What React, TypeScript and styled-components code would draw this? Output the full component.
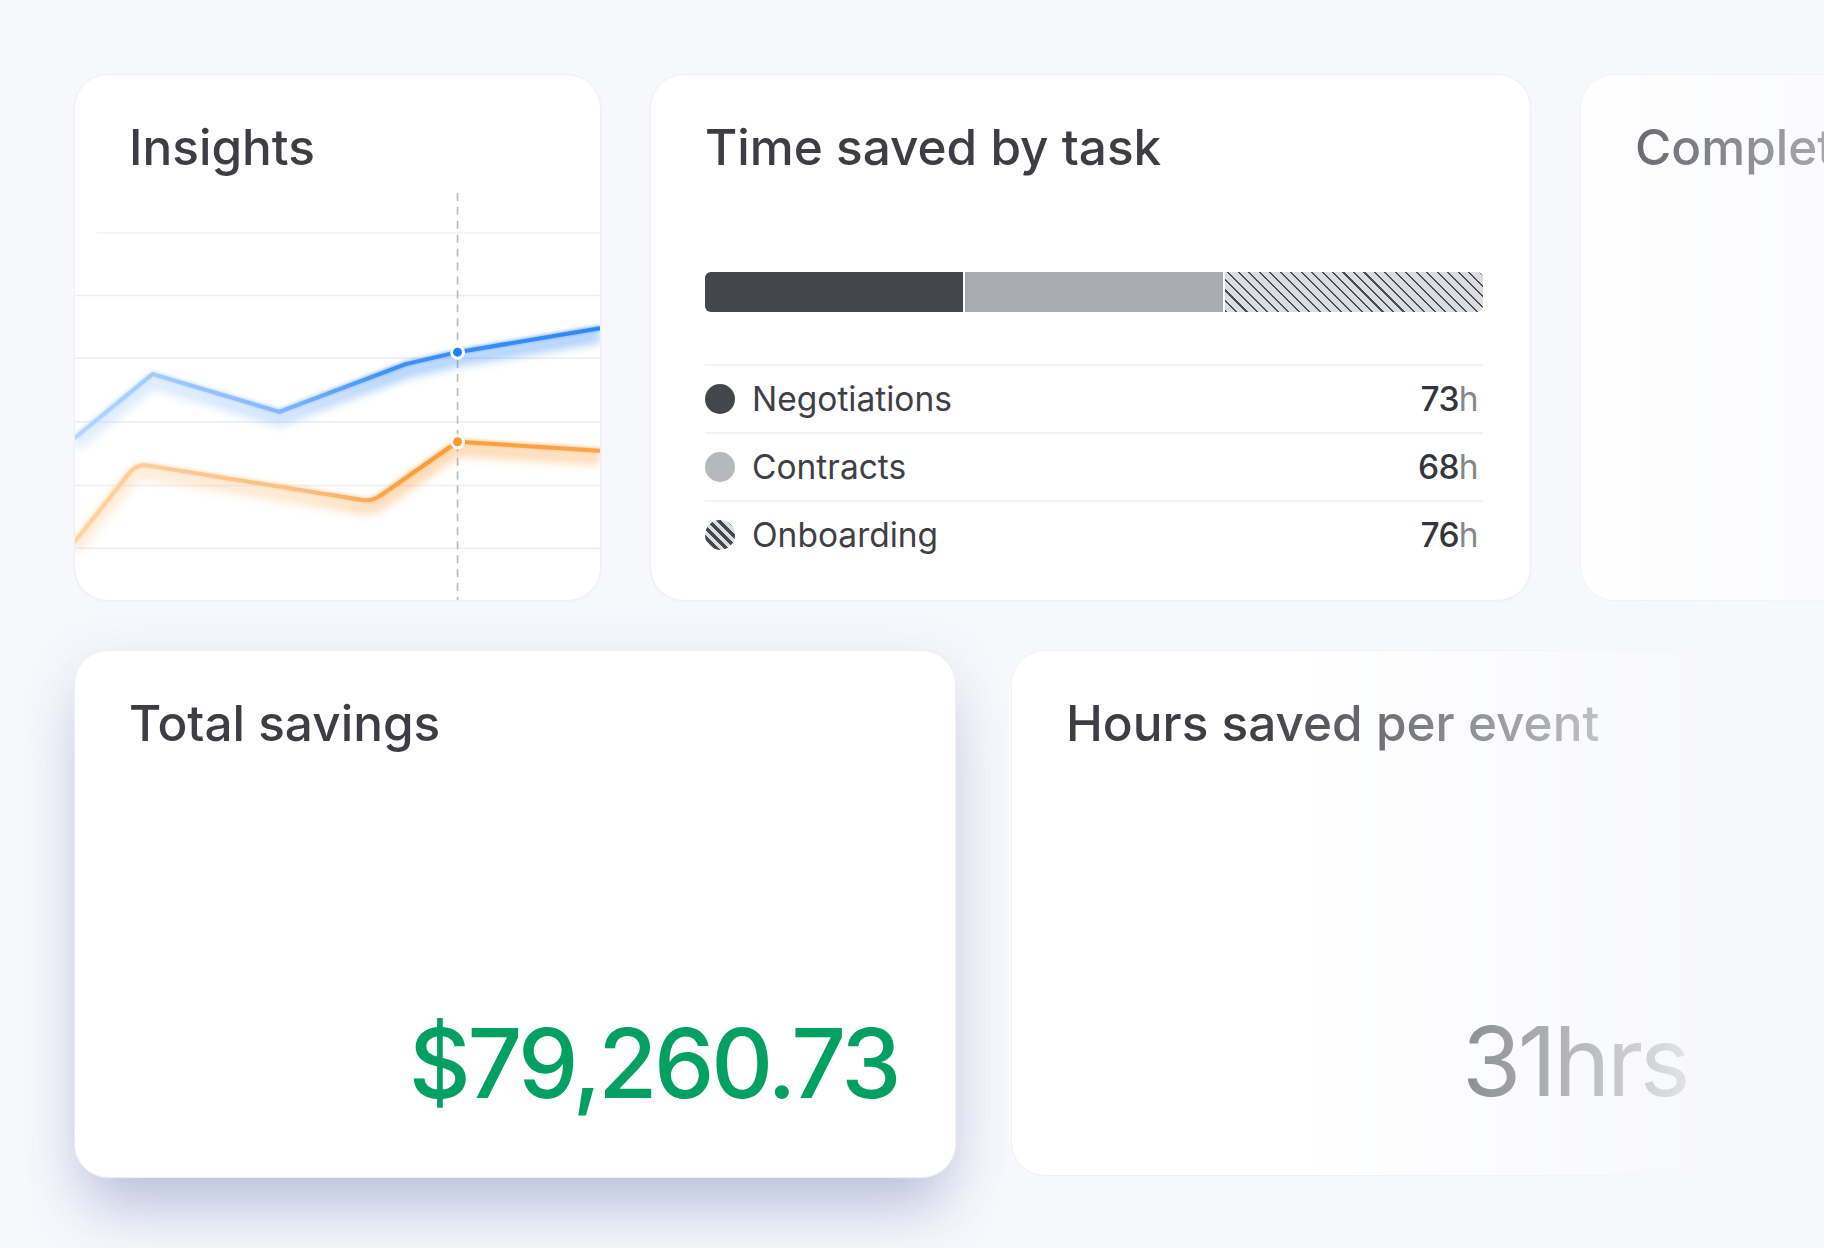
import * as React from 'react';
import styled, { createGlobalStyle } from 'styled-components';

const GlobalStyle = createGlobalStyle`
  html, body {
    margin: 0;
    padding: 0;
    background: #f7f8fc;
    overflow: hidden;
  }

  body {
    font-family: Inter, "Noto Sans", "Liberation Sans", sans-serif;
    -webkit-font-smoothing: antialiased;
  }
`;

const Board = styled.main`
  box-sizing: border-box;
  width: 1824px;
  height: 1248px;
  padding: 74px 0 0 74px;
  display: flex;
  flex-direction: column;
  gap: 49px;
  overflow: hidden;
`;

const CardRow = styled.div<{ $gap: number }>`
  display: flex;
  gap: ${({ $gap }) => $gap}px;
`;

const Card = styled.section<{ $width: number; $height: number }>`
  position: relative;
  box-sizing: border-box;
  flex: 0 0 ${({ $width }) => $width}px;
  height: ${({ $height }) => $height}px;
  display: flex;
  flex-direction: column;
  background: #ffffff;
  border: 1px solid #eeeff4;
  border-radius: 34px;
  box-shadow: 0 1px 3px rgba(40, 50, 90, 0.03);
  overflow: hidden;
`;

const ElevatedCard = styled(Card)`
  box-shadow:
    0 44px 60px -14px rgba(92, 110, 172, 0.32),
    0 12px 56px rgba(92, 110, 172, 0.14);
`;

const FadedCard = styled(Card)<{ $from: string; $to: string; $alpha: number }>`
  -webkit-mask-image: linear-gradient(
    to right,
    rgba(0, 0, 0, ${({ $alpha }) => $alpha}) ${({ $from }) => $from},
    rgba(0, 0, 0, 0) ${({ $to }) => $to}
  );
  mask-image: linear-gradient(
    to right,
    rgba(0, 0, 0, ${({ $alpha }) => $alpha}) ${({ $from }) => $from},
    rgba(0, 0, 0, 0) ${({ $to }) => $to}
  );
`;

const CardTitle = styled.h2`
  margin: 0;
  padding: 42px 54px 0;
  font-size: 49.5px;
  line-height: 60px;
  font-weight: 500;
  color: #3d3e44;
  white-space: nowrap;
`;

const ChartSvg = styled.svg`
  display: block;
  flex: 1;
  width: 100%;
`;

const StackBar = styled.div`
  display: flex;
  gap: 2px;
  height: 40px;
  margin: 95px 47px 0 54px;
  border-radius: 6px;
  overflow: hidden;
  background: #ffffff;
`;

type Pattern = 'dark' | 'light' | 'hatched';

const fills: Record<Pattern, string> = {
  dark: '#43464d',
  light: '#a9abb1',
  hatched: 'repeating-linear-gradient(45deg, #4a4d54 0 1.5px, #dcdde2 1.5px 7.4px)',
};

const BarSegment = styled.div<{ $pattern: Pattern }>`
  flex: 1;
  background: ${({ $pattern }) => fills[$pattern]};
`;

const Legend = styled.ul`
  list-style: none;
  margin: 52px 47px 0 54px;
  padding: 0;
`;

const LegendRow = styled.li`
  box-sizing: border-box;
  display: flex;
  align-items: center;
  gap: 17px;
  height: 68px;
  padding-right: 5px;
  border-top: 2px solid #f1f1f5;
`;

const dotFills: Record<Pattern, string> = {
  dark: '#43464d',
  light: '#b7b8bd',
  hatched: 'repeating-linear-gradient(45deg, #45484f 0 3.6px, #dcdde1 3.6px 7.2px)',
};

const LegendDot = styled.span<{ $pattern: Pattern }>`
  flex: 0 0 30px;
  height: 30px;
  border-radius: 50%;
  background: ${({ $pattern }) => dotFills[$pattern]};
`;

const LegendLabel = styled.span`
  flex: 1;
  font-size: 33.5px;
  font-weight: 400;
  color: #3f4046;
`;

const LegendValue = styled.span`
  font-size: 33.5px;
  font-weight: 500;
  color: #35363b;
  letter-spacing: -0.02em;
`;

const Unit = styled.span`
  font-weight: 400;
  color: #86878d;
`;

const BigFigure = styled.div<{ $color: string; $weight: number }>`
  margin-top: auto;
  padding: 0 57px 66px;
  text-align: right;
  font-size: 96px;
  line-height: 96px;
  font-weight: ${({ $weight }) => $weight};
  letter-spacing: -0.035em;
  color: ${({ $color }) => $color};
  white-space: nowrap;
`;

type Task = { name: string; hours: number; pattern: Pattern };

const tasks: Task[] = [
  { name: 'Negotiations', hours: 73, pattern: 'dark' },
  { name: 'Contracts', hours: 68, pattern: 'light' },
  { name: 'Onboarding', hours: 76, pattern: 'hatched' },
];

const gridLines = [56, 119, 182, 246, 310, 373];

const bluePath = 'M0 262 L78 198 L205 236 L332 188 L384 176 L527 152';
const orangePath = 'M0 366 L55 297 Q62 288 74 290 L285 324 Q297 327 307 320 L384 266 L527 275';

const InsightsChart = () => (
  <ChartSvg viewBox="0 0 527 425" preserveAspectRatio="none">
    <defs>
      <linearGradient id="blueStroke" x1="0" y1="0" x2="527" y2="0" gradientUnits="userSpaceOnUse">
        <stop offset="0" stopColor="#b6d5fd" />
        <stop offset="0.38" stopColor="#86b8fa" />
        <stop offset="0.6" stopColor="#3f8ff6" />
        <stop offset="1" stopColor="#2f87f6" />
      </linearGradient>
      <linearGradient id="orangeStroke" x1="0" y1="0" x2="527" y2="0" gradientUnits="userSpaceOnUse">
        <stop offset="0" stopColor="#fdd3a6" />
        <stop offset="0.45" stopColor="#fbbd7c" />
        <stop offset="0.64" stopColor="#f89d3b" />
        <stop offset="1" stopColor="#f9a548" />
      </linearGradient>
      <filter id="glow" x="-10%" y="-40%" width="120%" height="180%">
        <feGaussianBlur stdDeviation="5" />
      </filter>
      <filter id="soft" x="-10%" y="-40%" width="120%" height="180%">
        <feGaussianBlur stdDeviation="1.6" />
      </filter>
    </defs>

    {gridLines.map((y, i) => (
      <line
        key={y}
        x1={i === 0 ? 22 : 0}
        x2={527}
        y1={y}
        y2={y}
        stroke={i === 0 ? '#f3f3f6' : '#eeeef2'}
        strokeWidth={1.6}
      />
    ))}

    <line x1={384} x2={384} y1={16} y2={425} stroke="#b9b9be" strokeWidth={1.6} strokeDasharray="8 6" />

    <path d={bluePath} transform="translate(0 8)" fill="none" stroke="url(#blueStroke)" strokeWidth={12} opacity={0.42} filter="url(#glow)" />
    <path d={orangePath} transform="translate(0 8)" fill="none" stroke="url(#orangeStroke)" strokeWidth={12} opacity={0.42} filter="url(#glow)" />

    <path d={bluePath} fill="none" stroke="url(#blueStroke)" strokeWidth={6} opacity={0.5} filter="url(#soft)" />
    <path d={orangePath} fill="none" stroke="url(#orangeStroke)" strokeWidth={6} opacity={0.5} filter="url(#soft)" />

    <path d={bluePath} fill="none" stroke="url(#blueStroke)" strokeWidth={4} strokeLinejoin="round" strokeLinecap="round" />
    <path d={orangePath} fill="none" stroke="url(#orangeStroke)" strokeWidth={4} strokeLinejoin="round" strokeLinecap="round" />

    <circle cx={384} cy={176} r={6} fill="#1f80f5" stroke="#ffffff" strokeWidth={3} />
    <circle cx={384} cy={266} r={6} fill="#fa9a2d" stroke="#ffffff" strokeWidth={3} />
  </ChartSvg>
);

const App = () => (
  <>
    <GlobalStyle />
    <Board>
      <CardRow $gap={49}>
        <Card $width={527} $height={527}>
          <CardTitle>Insights</CardTitle>
          <InsightsChart />
        </Card>

        <Card $width={881} $height={527}>
          <CardTitle>Time saved by task</CardTitle>
          <StackBar>
            {tasks.map((task) => (
              <BarSegment key={task.name} $pattern={task.pattern} />
            ))}
          </StackBar>
          <Legend>
            {tasks.map((task) => (
              <LegendRow key={task.name}>
                <LegendDot $pattern={task.pattern} />
                <LegendLabel>{task.name}</LegendLabel>
                <LegendValue>
                  {task.hours}
                  <Unit>h</Unit>
                </LegendValue>
              </LegendRow>
            ))}
          </Legend>
        </Card>

        <FadedCard $width={620} $height={527} $from="0px" $to="500px" $alpha={0.85}>
          <CardTitle>Completed tasks</CardTitle>
        </FadedCard>
      </CardRow>

      <CardRow $gap={55}>
        <ElevatedCard $width={882} $height={528}>
          <CardTitle>Total savings</CardTitle>
          <BigFigure $color="#03a063" $weight={500}>$79,260.73</BigFigure>
        </ElevatedCard>

        <FadedCard $width={734} $height={526} $from="240px" $to="734px" $alpha={1}>
          <CardTitle>Hours saved per event</CardTitle>
          <BigFigure $color="#3d3e44" $weight={400}>31hrs</BigFigure>
        </FadedCard>
      </CardRow>
    </Board>
  </>
);

export default App;
